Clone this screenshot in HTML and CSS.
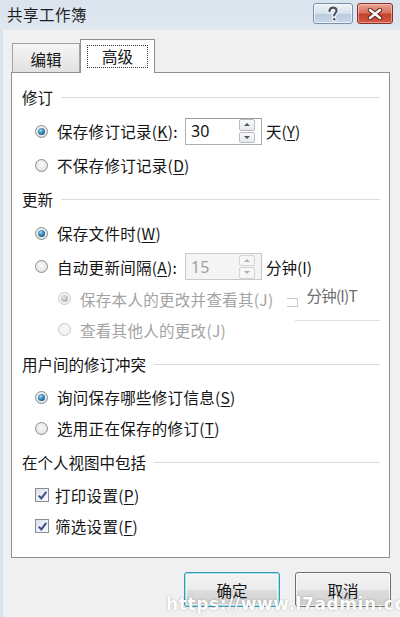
FILE: index.html
```html
<!DOCTYPE html>
<html lang="zh-CN">
<head>
<meta charset="utf-8">
<title>共享工作簿</title>
<link rel="stylesheet" href="styles.css">
</head>
<body>
<div class="window">
  <div class="titlebar">
    <span class="title">共享工作簿</span>
    <div class="tbtns">
      <div class="tbtn help">
        <svg width="14" height="16" viewBox="0 0 14 16"><path d="M3.5 5.2 C3.5 2.6 5 1.6 7 1.6 C9.2 1.6 10.6 2.8 10.6 4.7 C10.6 6.6 8.2 7.2 8.2 9.4" fill="none" stroke="#fff" stroke-width="4.2" stroke-linecap="round"/><path d="M3.5 5.2 C3.5 2.6 5 1.6 7 1.6 C9.2 1.6 10.6 2.8 10.6 4.7 C10.6 6.6 8.2 7.2 8.2 9.4" fill="none" stroke="#4b5360" stroke-width="2.2" stroke-linecap="round"/><circle cx="8.2" cy="13.2" r="2.3" fill="#fff"/><circle cx="8.2" cy="13.2" r="1.3" fill="#4b5360"/></svg>
      </div>
      <div class="tbtn close">
        <svg width="16" height="12" viewBox="0 0 16 12"><path d="M3 2 L13 10 M13 2 L3 10" stroke="#5a1c14" stroke-width="4.4" stroke-linecap="round"/><path d="M3 2 L13 10 M13 2 L3 10" stroke="#fff" stroke-width="2.6" stroke-linecap="round"/></svg>
      </div>
    </div>
  </div>
  <div class="content">
    <div class="tabs">
      <div class="tab">编辑</div>
      <div class="tab active"><span class="focus">高级</span></div>
    </div>
    <div class="panel">
      <div class="sec"><span>修订</span><i class="rule"></i></div>
      <div class="row r34"><span class="radio on"></span><span class="lbl fixed">保存修订记录(<u>K</u>):</span>
        <div class="spin"><span class="num">30</span><span class="arrows"><span class="up"></span><span class="dn"></span></span></div>
        <span class="unit">天(<u>Y</u>)</span></div>
      <div class="row r34"><span class="radio"></span><span class="lbl">不保存修订记录(<u>D</u>)</span></div>

      <div class="sec"><span>更新</span><i class="rule"></i></div>
      <div class="row r34"><span class="radio on"></span><span class="lbl">保存文件时(<u>W</u>)</span></div>
      <div class="row r33"><span class="radio"></span><span class="lbl fixed">自动更新间隔(<u>A</u>):</span>
        <div class="spin disabled"><span class="num">15</span><span class="arrows"><span class="up"></span><span class="dn"></span></span></div>
        <span class="unit">分钟(I)</span></div>
      <div class="row sub r31"><span class="radio dis on"></span><span class="lbl gray">保存本人的更改并查看其(J)</span><span class="ghostbox"></span><span class="ghost">分钟(I)T</span></div>
      <div class="row sub r31"><span class="radio dis"></span><span class="lbl gray">查看其他人的更改(J)</span><i class="ghostrule"></i></div>

      <div class="sec gap2"><span>用户间的修订冲突</span><i class="rule"></i></div>
      <div class="row r32"><span class="radio on"></span><span class="lbl">询问保存哪些修订信息(<u>S</u>)</span></div>
      <div class="row r30"><span class="radio"></span><span class="lbl">选用正在保存的修订(<u>T</u>)</span></div>

      <div class="sec gap2"><span>在个人视图中包括</span><i class="rule"></i></div>
      <div class="row r32"><span class="check"><svg width="11" height="11" viewBox="0 0 11 11"><path d="M1.8 5.6 L4.3 8.4 L9.3 1.8" fill="none" stroke="#3d4f8c" stroke-width="2"/></svg></span><span class="lbl">打印设置(<u>P</u>)</span></div>
      <div class="row r30"><span class="check"><svg width="11" height="11" viewBox="0 0 11 11"><path d="M1.8 5.6 L4.3 8.4 L9.3 1.8" fill="none" stroke="#3d4f8c" stroke-width="2"/></svg></span><span class="lbl">筛选设置(<u>F</u>)</span></div>
    </div>
    <div class="buttons">
      <div class="btn default">确定</div>
      <div class="btn">取消</div>
    </div>
  </div>
  <div class="watermark">https://www.l7admin.cc</div>
</div>
</body>
</html>
```

FILE: styles.css
```css
html, body {
  margin: 0;
  padding: 0;
}
body {
  width: 400px;
  height: 617px;
  overflow: hidden;
  background: #f0f0f0;
  font-family: "Noto Sans CJK SC", "Noto Sans", sans-serif;
  font-size: 15.5px;
  color: #141414;
}
.window {
  position: relative;
  width: 400px;
  height: 617px;
  box-sizing: border-box;
  border-left: 3px solid #d7e2ed;
  background: #f0f0f0;
}
.titlebar {
  height: 30px;
  margin-left: -3px;
  background: linear-gradient(#dbe4ee, #dfe8f1);
  display: flex;
  align-items: center;
  justify-content: space-between;
  padding-left: 7px;
  padding-right: 7px;
}
.title {
  font-size: 15.5px;
  color: #1e1e1e;
  letter-spacing: 0.5px;
  margin-top: -2px;
}
.tbtns {
  display: flex;
  gap: 4px;
  align-self: flex-start;
  margin-top: 3px;
}
.tbtn {
  height: 21px;
  box-sizing: border-box;
  border-radius: 3px;
  display: flex;
  align-items: center;
  justify-content: center;
}
.help {
  width: 40px;
  border: 1px solid #7890ad;
  background: linear-gradient(#eef3f8 0%, #d5e0ec 50%, #b9cadd 51%, #c9d8e8 100%);
  box-shadow: inset 0 0 0 1px rgba(255,255,255,0.6);
}
.close {
  width: 36px;
  border: 1px solid #843024;
  background: linear-gradient(#eaa293 0%, #d8705e 48%, #c4402c 52%, #d25a44 100%);
  box-shadow: inset 0 0 0 1px rgba(255,220,210,0.5);
}
.content {
  padding-left: 8px;
}
.tabs {
  display: flex;
  align-items: flex-end;
  height: 42px;
  padding-left: 1px;
}
.tab {
  width: 68px;
  height: 29px;
  box-sizing: border-box;
  border: 1px solid #a3a3a3;
  border-bottom: none;
  background: linear-gradient(#f5f5f5, #e1e1e1);
  display: flex;
  align-items: center;
  justify-content: center;
  padding-top: 2px;
}
.tab.active {
  width: 75px;
  height: 34px;
  background: #fff;
  border-color: #8e9097;
  margin-bottom: -1px;
  position: relative;
  z-index: 1;
  padding-top: 0;
}
.focus {
  width: 61px;
  height: 23px;
  box-sizing: border-box;
  border: 1px dotted #333;
  display: flex;
  align-items: center;
  justify-content: center;
  margin-top: -1px;
}
.panel {
  width: 379px;
  height: 486px;
  box-sizing: border-box;
  border: 1px solid #8e9097;
  background: #fff;
  padding: 7px 0 0 10px;
}
.sec {
  height: 34px;
  display: flex;
  align-items: center;
  gap: 8px;
}
.sec.gap2 {
  margin-top: 2px;
}
.rule {
  flex: 1;
  height: 1px;
  background: #dcdcdc;
  margin-right: 9px;
}
.row {
  display: flex;
  align-items: center;
  padding-left: 13px;
}
.row.sub {
  padding-left: 36px;
}
.r34 { height: 34px; }
.r33 { height: 33px; }
.r32 { height: 32px; }
.r31 { height: 31px; }
.r30 { height: 30px; }
.radio {
  width: 13px;
  height: 13px;
  flex: none;
  box-sizing: border-box;
  border-radius: 50%;
  border: 1px solid #8a8c8f;
  background: radial-gradient(circle at 50% 40%, #fafafa 0, #e4e4e4 70%, #d0d0d0 100%);
  display: flex;
  align-items: center;
  justify-content: center;
  margin-right: 9px;
}
.radio.on::after {
  content: "";
  width: 7px;
  height: 7px;
  border-radius: 50%;
  background: radial-gradient(circle at 40% 35%, #a8e0f4 0, #3b8cc0 40%, #0f3e68 100%);
}
.radio.dis {
  border-color: #c6c6c6;
  background: #f4f4f4;
}
.radio.dis.on::after {
  background: radial-gradient(circle at 40% 35%, #e8e8e8 0, #b8b8b8 60%, #9a9a9a 100%);
}
.check {
  width: 14px;
  height: 14px;
  flex: none;
  box-sizing: border-box;
  border: 1px solid #8a8c8f;
  background: linear-gradient(135deg, #dde2ec, #f8f9fc);
  display: flex;
  align-items: center;
  justify-content: center;
  margin-right: 6px;
}
.lbl {
  white-space: nowrap;
  letter-spacing: 0.3px;
}
.lbl.fixed {
  width: 135px;
  flex: none;
}
.lbl.gray {
  color: #a3a3a3;
}
u {
  text-decoration: underline;
  text-underline-offset: 2px;
  text-decoration-thickness: 1px;
}
.spin {
  width: 77px;
  height: 27px;
  box-sizing: border-box;
  border: 1px solid #abadb3;
  border-top-color: #9a9ca2;
  background: #fff;
  display: flex;
  align-items: center;
  justify-content: space-between;
  padding: 0 6px 0 5px;
  margin-left: -7px;
  margin-right: 4px;
  font-family: "Noto Sans", "Liberation Sans", sans-serif;
  font-size: 16px;
}
.spin.disabled {
  background: #f4f4f4;
  border-color: #c9c9c9;
  color: #a0a0a0;
}
.arrows {
  width: 16px;
  height: 24px;
  display: flex;
  flex-direction: column;
  gap: 1px;
}
.up, .dn {
  flex: 1;
  box-sizing: border-box;
  border: 1px solid #b9bcc2;
  border-radius: 2px;
  background: linear-gradient(#fafafa, #e6e8ec);
  display: flex;
  align-items: center;
  justify-content: center;
}
.up::after {
  content: "";
  border-left: 3px solid transparent;
  border-right: 3px solid transparent;
  border-bottom: 3px solid #4d5564;
}
.dn::after {
  content: "";
  border-left: 3px solid transparent;
  border-right: 3px solid transparent;
  border-top: 3px solid #4d5564;
}
.spin.disabled .up, .spin.disabled .dn {
  border-color: #d4d4d4;
  background: #f6f6f6;
}
.spin.disabled .up::after { border-bottom-color: #b0b0b0; }
.spin.disabled .dn::after { border-top-color: #b0b0b0; }
.unit {
  white-space: nowrap;
}
.ghostbox {
  width: 10px;
  height: 7px;
  border: 1px solid #c8c8c8;
  border-left: none;
  margin-left: 14px;
  margin-top: 8px;
  flex: none;
}
.ghost {
  margin-left: 8px;
  font-size: 15.5px;
  color: #6e6e6e;
  letter-spacing: -0.8px;
  margin-top: -8px;
  white-space: nowrap;
}
.ghostrule {
  width: 85px;
  height: 1px;
  background: #dedede;
  margin-left: auto;
  margin-right: 9px;
  align-self: flex-start;
  margin-top: 6px;
}
.buttons {
  display: flex;
  justify-content: flex-end;
  gap: 15px;
  padding-top: 14px;
  padding-right: 9px;
}
.btn {
  width: 96px;
  height: 35px;
  box-sizing: border-box;
  border: 1px solid #707070;
  border-radius: 3px;
  background: linear-gradient(#f3f3f3 0%, #ebebeb 50%, #dddddd 51%, #cfcfcf 100%);
  box-shadow: inset 0 0 0 1px rgba(255,255,255,0.7);
  display: flex;
  align-items: center;
  justify-content: center;
  font-size: 15.5px;
}
.btn.default {
  border-color: #3c99b4;
  box-shadow: inset 0 0 0 1px #9fe0ee, inset 0 0 0 2px rgba(255,255,255,0.6);
}
.watermark {
  position: absolute;
  left: 163px;
  top: 594px;
  font-family: "DejaVu Sans", "Liberation Sans", sans-serif;
  font-weight: bold;
  font-size: 17px;
  line-height: 20px;
  color: #fff;
  letter-spacing: 0.6px;
  text-shadow: 0 0 1px rgba(0,0,0,0.3), 0 0 3px rgba(0,0,0,0.12);
  white-space: nowrap;
}
```
